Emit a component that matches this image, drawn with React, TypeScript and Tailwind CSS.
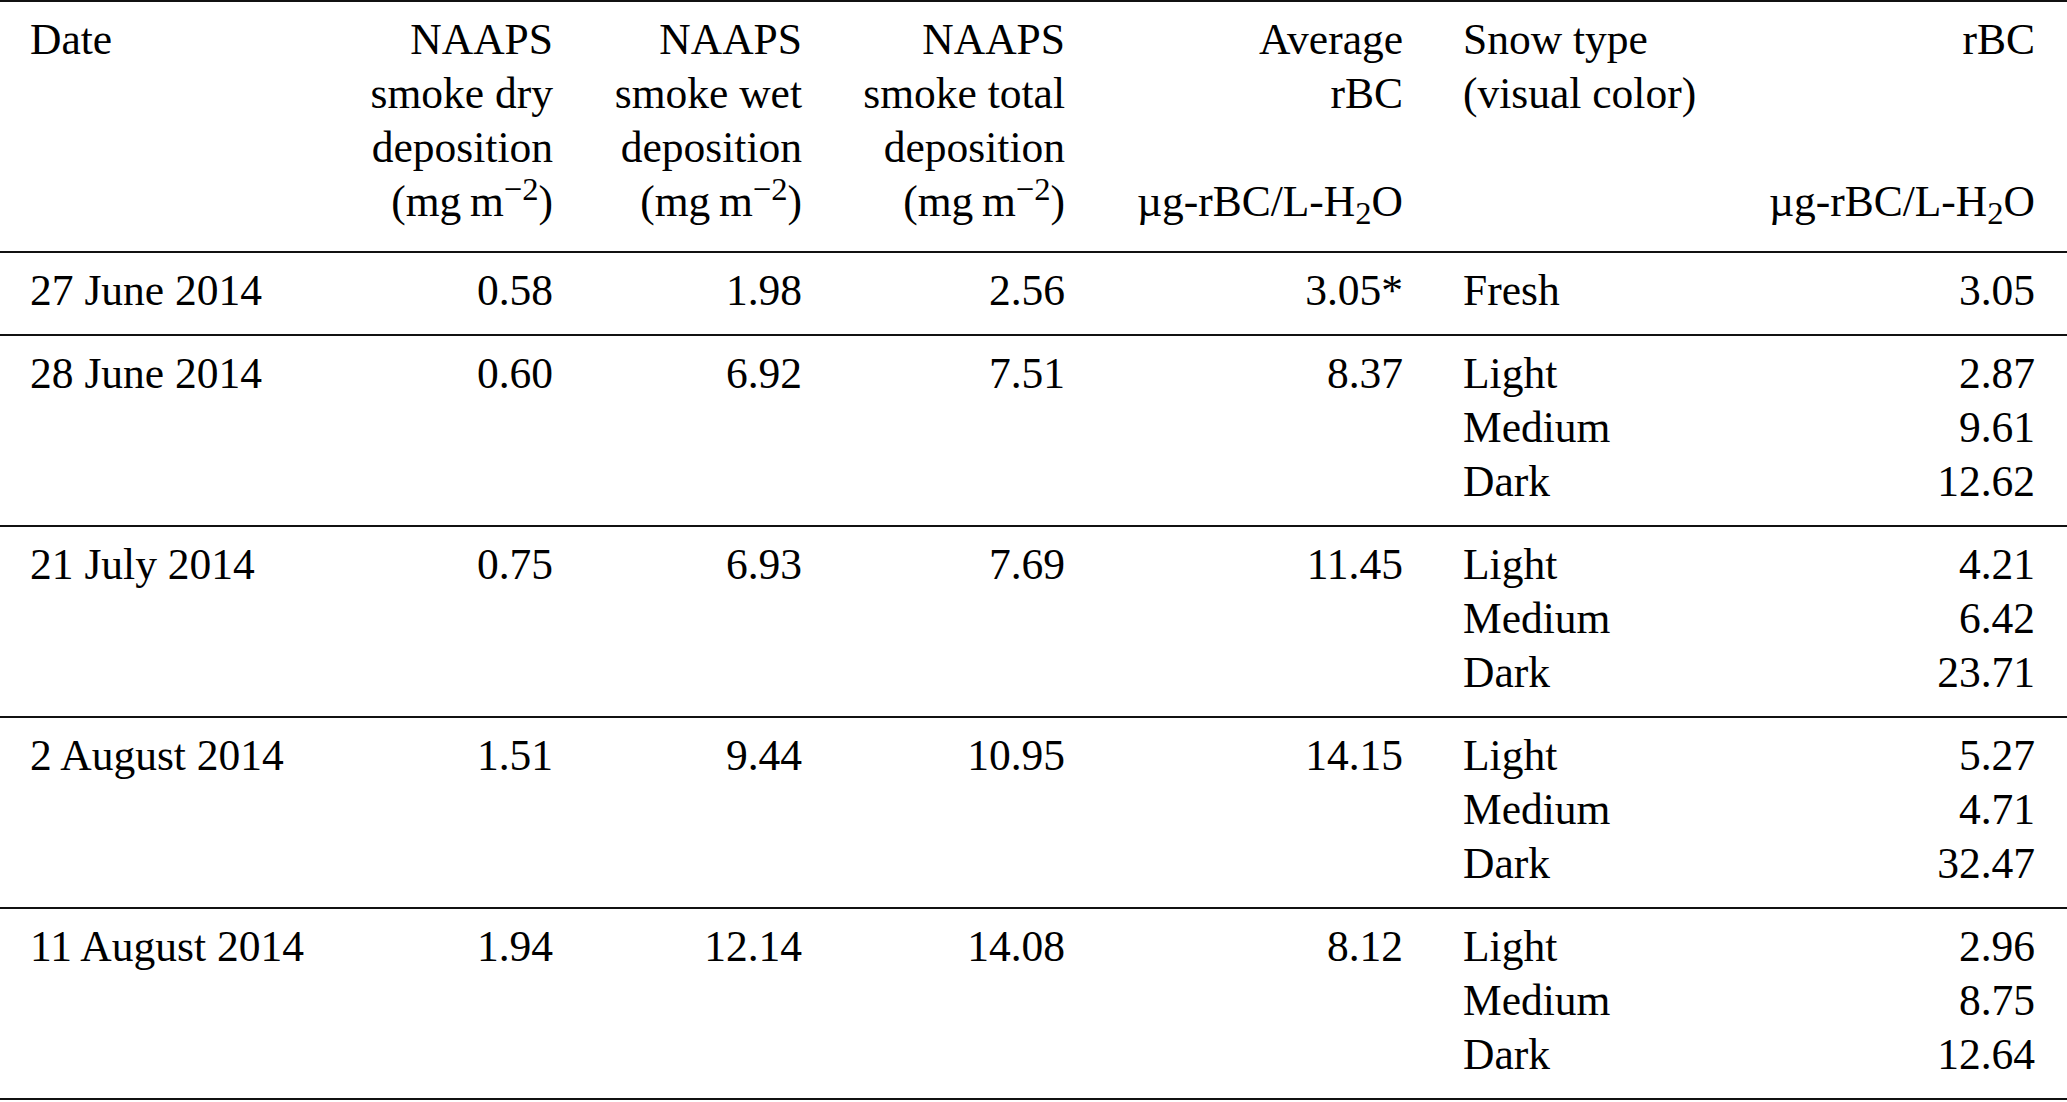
type Row = {
  date: string;
  dry: string;
  wet: string;
  total: string;
  avg: string;
  types: string[];
  rbc: string[];
};

const rows: Row[] = [
  { date: "27 June 2014", dry: "0.58", wet: "1.98", total: "2.56", avg: "3.05*", types: ["Fresh"], rbc: ["3.05"] },
  { date: "28 June 2014", dry: "0.60", wet: "6.92", total: "7.51", avg: "8.37", types: ["Light", "Medium", "Dark"], rbc: ["2.87", "9.61", "12.62"] },
  { date: "21 July 2014", dry: "0.75", wet: "6.93", total: "7.69", avg: "11.45", types: ["Light", "Medium", "Dark"], rbc: ["4.21", "6.42", "23.71"] },
  { date: "2 August 2014", dry: "1.51", wet: "9.44", total: "10.95", avg: "14.15", types: ["Light", "Medium", "Dark"], rbc: ["5.27", "4.71", "32.47"] },
  { date: "11 August 2014", dry: "1.94", wet: "12.14", total: "14.08", avg: "8.12", types: ["Light", "Medium", "Dark"], rbc: ["2.96", "8.75", "12.64"] },
];

// column grid shared by header and body rows
const grid = "grid grid-cols-[330px_223px_249px_263px_338px_297px_335px]";

function Unit() {
  return (
    <span>
      (mg&#8201;m<sup>−2</sup>)
    </span>
  );
}

function Conc() {
  return (
    <span>
      µg-rBC/L-H<sub>2</sub>O
    </span>
  );
}

export default function App() {
  return (
    <div className="min-h-screen bg-white text-black font-[family-name:Liberation_Serif,Times_New_Roman,serif] text-[43.5px] leading-[54px] whitespace-nowrap">
      {/* Header */}
      <div className={`${grid} border-t-2 border-[#111] pt-[10px] pb-[23px]`}>
        <div className="pl-[30px]">Date</div>
        <div className="text-right">
          <div>NAAPS</div>
          <div>smoke dry</div>
          <div>deposition</div>
          <div><Unit /></div>
        </div>
        <div className="text-right">
          <div>NAAPS</div>
          <div>smoke wet</div>
          <div>deposition</div>
          <div><Unit /></div>
        </div>
        <div className="text-right">
          <div>NAAPS</div>
          <div>smoke total</div>
          <div>deposition</div>
          <div><Unit /></div>
        </div>
        <div className="text-right">
          <div>Average</div>
          <div>rBC</div>
          <div>&nbsp;</div>
          <div><Conc /></div>
        </div>
        <div className="pl-[60px]">
          <div>Snow type</div>
          <div>(visual color)</div>
        </div>
        <div className="text-right">
          <div>rBC</div>
          <div>&nbsp;</div>
          <div>&nbsp;</div>
          <div><Conc /></div>
        </div>
      </div>

      {/* Body */}
      {rows.map((r) => (
        <div key={r.date} className={`${grid} border-t-2 border-[#111] pt-[10px] pb-[17px]`}>
          <div className="pl-[30px]">{r.date}</div>
          <div className="text-right">{r.dry}</div>
          <div className="text-right">{r.wet}</div>
          <div className="text-right">{r.total}</div>
          <div className="text-right">{r.avg}</div>
          <div className="pl-[60px]">
            {r.types.map((t) => (
              <div key={t}>{t}</div>
            ))}
          </div>
          <div className="text-right">
            {r.rbc.map((v, i) => (
              <div key={i}>{v}</div>
            ))}
          </div>
        </div>
      ))}
      <div className="border-t-2 border-[#111]" />
    </div>
  );
}
